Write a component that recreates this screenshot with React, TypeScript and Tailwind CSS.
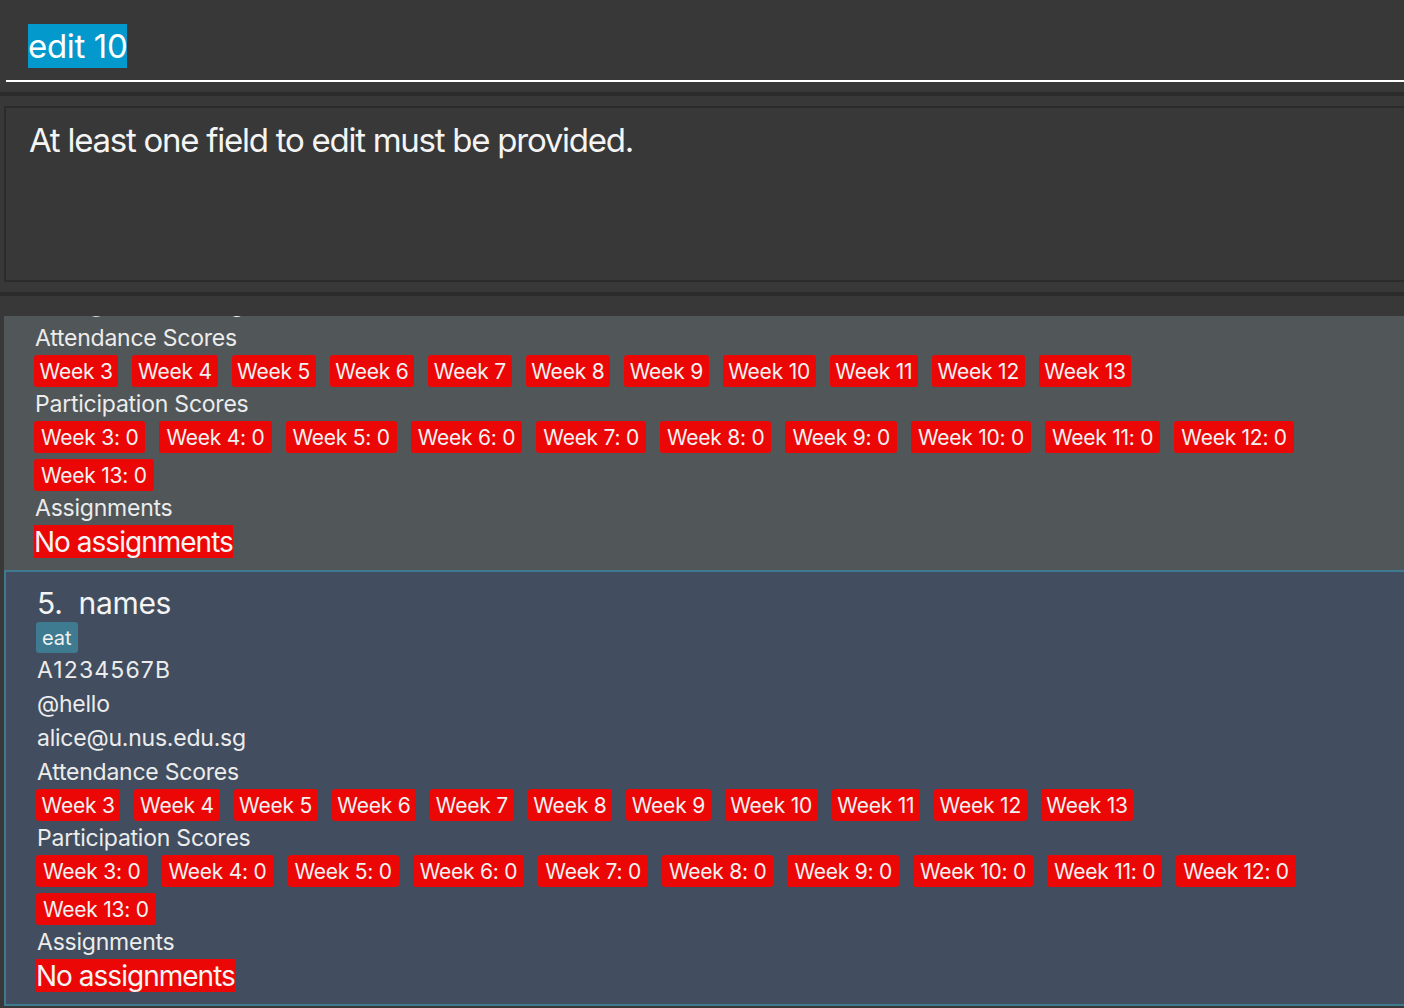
import React from "react";

const attendance = ["Week 3", "Week 4", "Week 5", "Week 6", "Week 7", "Week 8", "Week 9", "Week 10", "Week 11", "Week 12", "Week 13"];
const participation = ["Week 3: 0", "Week 4: 0", "Week 5: 0", "Week 6: 0", "Week 7: 0", "Week 8: 0", "Week 9: 0", "Week 10: 0", "Week 11: 0", "Week 12: 0", "Week 13: 0"];

function RedTag({ text, narrow = false }: { text: string; narrow?: boolean }) {
  return (
    <div
      className={`h-[32px] ${narrow ? "px-[5.6px] tracking-[-0.01em]" : "px-[7px] tracking-[-0.012em]"} flex items-center rounded-[3px] bg-[#ec0707] text-[21px] text-[#f2f2f2] leading-none`}
    >
      {text}
    </div>
  );
}

function Line({ children, cls = "" }: { children: React.ReactNode; cls?: string }) {
  return <div className={`h-[34px] flex items-center text-[23px] text-[#ececec] tracking-[-0.01em] ${cls}`}>{children}</div>;
}

function CardBody({ index, name }: { index: number; name: string }) {
  return (
    <div className="flex flex-col items-start">
      <div className="h-[34px] flex items-center text-[30px] text-[#f4f4f4] tracking-[-0.01em]">
        <span>{index}.</span>
        <span className="ml-[16px]">{name}</span>
      </div>
      <div className="mt-[2px] ml-[-1px] h-[31px] px-[6px] flex items-center rounded-[3px] bg-[#3e7b91] text-[20px] text-[#f0f0f0] leading-none">eat</div>
      <Line cls="tracking-[0.05em]">A1234567B</Line>
      <Line>@hello</Line>
      <Line>alice@u.nus.edu.sg</Line>
      <Line>Attendance Scores</Line>
      <div className="ml-[-1px] flex flex-wrap gap-x-[14px] gap-y-[6px] w-[1340px]">
        {attendance.map((t) => (
          <RedTag key={t} text={t} narrow />
        ))}
      </div>
      <Line>Participation Scores</Line>
      <div className="ml-[-1px] flex flex-wrap gap-x-[14px] gap-y-[6px] w-[1340px]">
        {participation.map((t) => (
          <RedTag key={t} text={t} />
        ))}
      </div>
      <Line>Assignments</Line>
      <div className="ml-[-1px] h-[33px] flex items-center bg-[#ec0707] text-[28px] text-[#f4f4f4] tracking-[-0.035em] leading-none">No assignments</div>
    </div>
  );
}

export default function App() {
  return (
    <div
      className="w-[1404px] h-[1008px] bg-[#383838] overflow-hidden flex flex-col"
      style={{ fontFamily: "Inter, 'Noto Sans', sans-serif" }}
    >
      {/* command box */}
      <div className="h-[80px] pt-[24px] pl-[28px] flex items-start">
        <span className="h-[44px] flex items-center bg-[#0399cc] text-[33px] text-white tracking-[-0.01em] leading-none">edit 10</span>
      </div>
      <div className="ml-[6px] h-[2px] bg-white" />
      <div className="h-[10px]" />
      <div className="h-[4px] bg-[#2b2b2b]" />
      <div className="h-[10px]" />
      {/* result box */}
      <div className="ml-[4px] w-[1420px] h-[176px] border-2 border-[#2b2b2b] bg-[#383838] pl-[23px] pt-[12px]">
        <div className="text-[33px] text-[#f4f4f4] tracking-[-0.038em] leading-[40px]">At least one field to edit must be provided.</div>
      </div>
      <div className="h-[10px]" />
      <div className="h-[4px] bg-[#2b2b2b]" />
      <div className="h-[20px]" />
      {/* list */}
      <div className="ml-[4px] w-[1420px] h-[690px] overflow-hidden flex flex-col">
        <div className="h-[254px] shrink-0 overflow-hidden bg-[#515659]">
          <div className="-mt-[178px] pt-[14px] pb-[11px] pl-[31px]">
            <CardBody index={4} name="alice" />
          </div>
        </div>
        <div className="shrink-0 border-2 border-[#3e7b91] bg-[#424e5f] pt-[14px] pb-[12px] pl-[31px]">
          <CardBody index={5} name="names" />
        </div>
      </div>
    </div>
  );
}
